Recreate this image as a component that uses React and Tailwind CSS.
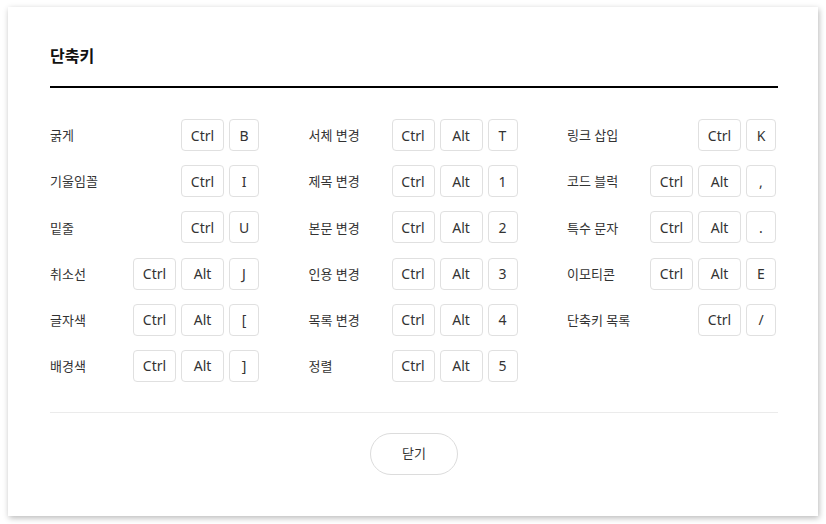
import React from "react";

const cols = [
  [
    ["굵게", ["Ctrl", "B"]],
    ["기울임꼴", ["Ctrl", "I"]],
    ["밑줄", ["Ctrl", "U"]],
    ["취소선", ["Ctrl", "Alt", "J"]],
    ["글자색", ["Ctrl", "Alt", "["]],
    ["배경색", ["Ctrl", "Alt", "]"]],
  ],
  [
    ["서체 변경", ["Ctrl", "Alt", "T"]],
    ["제목 변경", ["Ctrl", "Alt", "1"]],
    ["본문 변경", ["Ctrl", "Alt", "2"]],
    ["인용 변경", ["Ctrl", "Alt", "3"]],
    ["목록 변경", ["Ctrl", "Alt", "4"]],
    ["정렬", ["Ctrl", "Alt", "5"]],
  ],
  [
    ["링크 삽입", ["Ctrl", "K"]],
    ["코드 블럭", ["Ctrl", "Alt", ","]],
    ["특수 문자", ["Ctrl", "Alt", "."]],
    ["이모티콘", ["Ctrl", "Alt", "E"]],
    ["단축키 목록", ["Ctrl", "/"]],
  ],
];

function Key({ k }) {
  const wide = k === "Ctrl" || k === "Alt";
  return (
    <span
      className={
        (wide ? "w-[43px] " : "w-[30px] ") +
        "h-[32px] flex items-center justify-center rounded-[4px] border border-[#e0e0e0] text-[14px] text-[#333]"
      }
    >
      {k}
    </span>
  );
}

export default function App() {
  return (
    <div className="w-[826px] h-[524px] bg-white pt-[7px] pl-[8px]" style={{ fontFamily: '"Noto Sans", "Noto Sans CJK KR", sans-serif' }}>
      <div className="w-[810px] h-[509px] bg-white shadow-[1px_2px_6px_rgba(0,0,0,0.28)] px-[42px] pt-[37px] flex flex-col">
        <div className="h-[24px] leading-[24px] text-[16px] font-bold text-[#111]">단축키</div>
        <div className="mt-[18px] h-[2px] bg-black w-[728px]" />
        <div className="mt-[31px] flex gap-x-[49.5px]">
          {cols.map((col, ci) => (
            <div key={ci} className="w-[209px] flex flex-col gap-y-[14.2px]">
              {col.map(([label, keys]) => (
                <div key={label} className="h-[32px] flex items-center justify-between">
                  <span className="text-[13px] text-[#333] pt-[2px]">{label}</span>
                  <div className="flex gap-[5px]">
                    {keys.map((k) => (
                      <Key key={k} k={k} />
                    ))}
                  </div>
                </div>
              ))}
            </div>
          ))}
        </div>
        <div className="mt-[30px] h-px bg-[#ebebeb] w-[728px]" />
        <div className="mt-[20px] flex justify-center w-[728px]">
          <button className="w-[88px] h-[42px] rounded-full border border-[#dcdcdc] bg-white text-[13px] text-[#333]">
            닫기
          </button>
        </div>
      </div>
    </div>
  );
}
